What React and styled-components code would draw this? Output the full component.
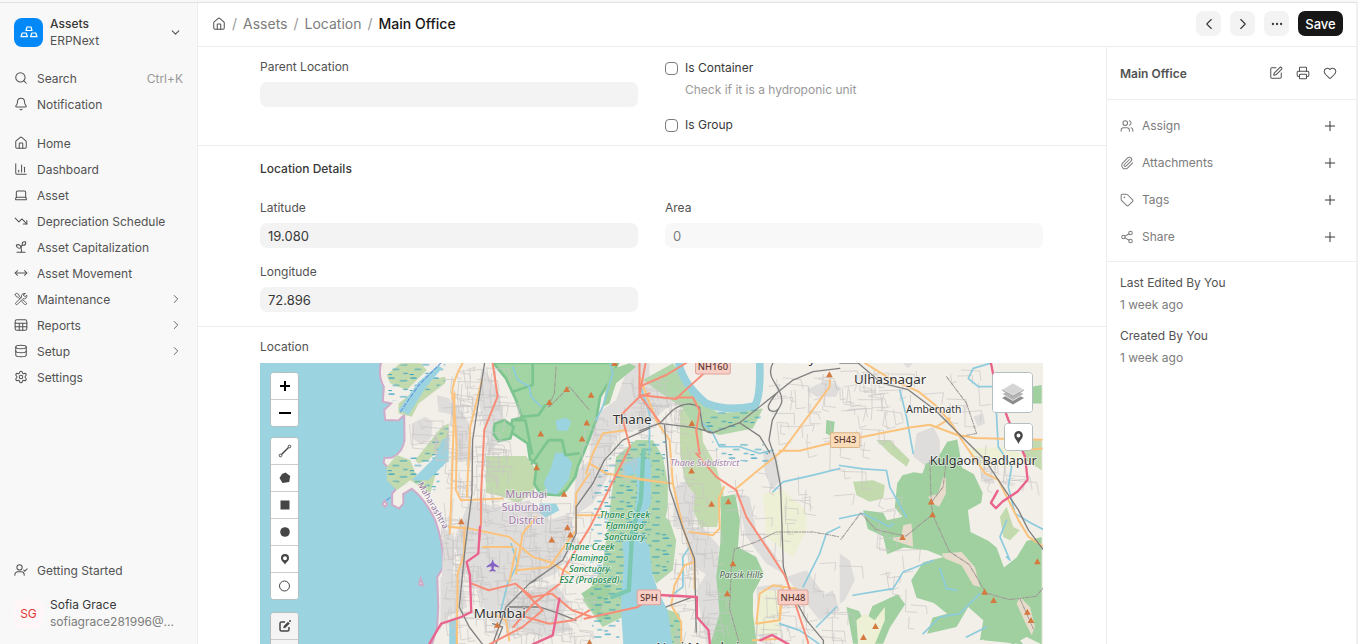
import React from 'react'
import styled, { createGlobalStyle } from 'styled-components'
import {
  Search, Bell, House, ChartColumn, Laptop, TrendingDown, Sprout, MoveHorizontal, Database,
  Settings, ChevronDown, ChevronRight, ChevronLeft, Ellipsis, SquarePen, Printer, Heart,
  Users, Paperclip, Tag, Share2, Plus,
} from 'lucide-react'

const GlobalStyle = createGlobalStyle`
  * { box-sizing: border-box; }
  body {
    margin: 0;
    background: #fff;
    color: #383838;
    font-family: Inter, "Liberation Sans", sans-serif;
    font-size: 12px;
  }
  button, input { font: inherit; color: inherit; }
  button { padding: 0; border: 0; background: none; cursor: pointer; }
  a { color: inherit; text-decoration: none; }
`

/* ---------- icons ---------- */

const Svg = ({ children, size = 14, box = 24, width = 1.75 }) => (
  <svg width={size} height={size} viewBox={`0 0 ${box} ${box}`} fill="none" stroke="currentColor"
    strokeWidth={width} strokeLinecap="round" strokeLinejoin="round" aria-hidden="true">
    {children}
  </svg>
)

const ToolsIcon = () => (
  <Svg width={1.5}>
    <path d="M2 4l2-2 4 2 1 3 3 3M2 4l2 4 3 1 3 3" />
    <path d="M14 16l2-2 5.500 5a2 2 0 0 1-2.500 2.500z" />
    <path d="M19 2.500a5 5 0 0 0-6 6.500L3 18.500a2 2 0 0 0 2.800 2.800L15.500 11.500a5 5 0 0 0 6.500-6l-3 2.500-3-2.500z" />
  </Svg>
)

const TableIcon = () => (
  <Svg>
    <rect x="2" y="3" width="20" height="18" rx="3" />
    <path d="M2 9h20M2 15h20M9 9v12M15 9v12" />
  </Svg>
)

const UserCheckIcon = () => (
  <Svg>
    <circle cx="9.500" cy="7.500" r="4.500" />
    <path d="M1.500 21v-1a5 5 0 0 1 5-5h6a5 5 0 0 1 5 5v1M16.500 12l2 2 4-4" />
  </Svg>
)

const AssetsLogo = () => (
  <svg width="18" height="12" viewBox="0 0 18 12" fill="none" stroke="#fff" strokeWidth="1.200" strokeLinejoin="round" aria-hidden="true">
    <path d="M7 1h4l1 3.500H6zM2.200 7h4l1.200 3.700H1zM11.800 7h4l1.200 3.700h-6.400z" />
  </svg>
)

/* ---------- page shell ---------- */

const Page = styled.div`
  display: flex;
  height: calc(100vh - 2px);
  overflow: hidden;
  border-top: 1px solid #dfe2e0;
  border-right: 2px solid #f0f0f0;
  outline: 2px solid #f5f8f5;
  margin-top: 2px;
`

const Sidebar = styled.nav`
  width: 198px;
  flex: none;
  display: flex;
  flex-direction: column;
  padding: 12px 14px 14px;
  background: #f8f8f8;
  border-right: 1px solid #ededed;
  color: #525252;
`

const AppSwitcher = styled.button`
  display: flex;
  align-items: center;
  gap: 7px;
  text-align: left;
  line-height: 17px;
  margin-bottom: 16px;
  padding-right: 1px;
`

const Logo = styled.span`
  width: 29px;
  height: 29px;
  border-radius: 8px;
  background: #0289f7;
  display: flex;
  align-items: center;
  justify-content: center;
`

const TwoLines = styled.span`
  flex: 1;
  min-width: 0;
  display: flex;
  flex-direction: column;
  span, strong { overflow: hidden; text-overflow: ellipsis; }
  strong { font-weight: ${p => (p.$plain ? 400 : 500)}; color: #383838; }
  span { color: ${p => (p.$plain ? '#7c7c7c' : '#525252')}; }
`

const NavGroup = styled.div`
  display: flex;
  flex-direction: column;
  margin-bottom: 13px;
`

const NavItem = styled.a`
  display: flex;
  align-items: center;
  gap: 9px;
  height: 26px;
  kbd { margin-left: auto; font: inherit; color: #999; }
  .arrow { margin-left: auto; }
`

const Bottom = styled.div`
  margin-top: auto;
`

const UserButton = styled.button`
  display: flex;
  align-items: center;
  gap: 7px;
  width: 100%;
  margin-top: 13px;
  line-height: 17px;
  text-align: left;
`

const Avatar = styled.span`
  width: 29px;
  height: 29px;
  border-radius: 8px;
  background: #fff7f7;
  color: #e03636;
  line-height: 29px;
  text-align: center;
`

const Main = styled.div`
  flex: 1;
  min-width: 0;
  display: flex;
  flex-direction: column;
`

const Header = styled.header`
  flex: none;
  display: flex;
  align-items: center;
  justify-content: space-between;
  height: 44px;
  padding: 0 13px 2px 14px;
  border-bottom: 1px solid #ededed;
`

const Crumbs = styled.div`
  display: flex;
  align-items: center;
  gap: 6px;
  font-size: 14px;
  color: #7c7c7c;
  svg { display: block; color: #525252; }
  i { font-style: normal; color: #999; }
  b { font-weight: 500; color: #171717; }
`

const Actions = styled.div`
  display: flex;
  gap: 9px;
`

const HeaderButton = styled.button`
  display: flex;
  align-items: center;
  justify-content: center;
  width: ${p => (p.$primary ? '45px' : '25px')};
  height: 25px;
  border-radius: 7px;
  background: ${p => (p.$primary ? '#171717' : '#f3f3f3')};
  color: ${p => (p.$primary ? '#fff' : '#383838')};
  font-size: 13px;
  font-weight: 500;
`

const Body = styled.div`
  flex: 1;
  min-height: 0;
  display: flex;
`

/* ---------- form ---------- */

const Form = styled.main`
  flex: 1;
  min-width: 0;
  overflow-y: auto;
  scrollbar-width: none;
`

const Section = styled.section`
  padding: ${p => p.$pad || '13px'} 63px 14px 62px;
  border-bottom: 1px solid #ededed;
  &:last-child { border: 0; }
  h2 {
    margin: 0 0 19px;
    font-size: 12px;
    font-weight: 500;
    line-height: 20px;
    color: #383838;
  }
`

const Columns = styled.div`
  display: grid;
  grid-template-columns: 1fr 1fr;
  gap: 14px 27px;
`

const Field = styled.label`
  display: flex;
  flex-direction: column;
  gap: 5px;
  line-height: 20px;
  color: #525252;
  input {
    height: 25px;
    width: 100%;
    padding: 0 8px;
    border: 0;
    border-radius: 7px;
    background: #f3f3f3;
    color: #383838;
    font-size: 13px;
    outline: none;
  }
  input:disabled { background: #f8f8f8; color: #7c7c7c; }
`

const Checks = styled.div`
  line-height: 22px;
  margin-bottom: -5px;
  p { margin: 0 0 13px 20px; color: #999; }
`

const Check = styled.label`
  display: flex;
  align-items: center;
  gap: 7px;
  color: #383838;
  input {
    appearance: none;
    width: 13px;
    height: 13px;
    margin: 0;
    border: 1px solid #7c7c7c;
    border-radius: 4px;
    background: #fff;
  }
`

const MapLabel = styled.h3`
  margin: 0 0 6px;
  font-size: 12px;
  font-weight: 400;
  line-height: 20px;
  color: #525252;
`

/* ---------- right panel ---------- */

const Panel = styled.aside`
  width: 250px;
  flex: none;
  border-left: 1px solid #ededed;
  color: #7c7c7c;
`

const PanelTitle = styled.div`
  display: flex;
  align-items: center;
  gap: 13px;
  height: 53px;
  padding: 0 19px 0 13px;
  border-bottom: 1px solid #ededed;
  color: #525252;
  h1 { flex: 1; margin: 0; font-size: 12px; font-weight: 600; }
  button { display: flex; }
`

const PanelList = styled.div`
  padding: 7px 18px 6px 13px;
  border-bottom: 1px solid #ededed;
`

const PanelRow = styled.div`
  display: flex;
  align-items: center;
  gap: 8px;
  height: 37px;
  button { margin-left: auto; display: flex; color: #383838; }
`

const History = styled.div`
  padding: 10px 13px;
  line-height: 22px;
  p { margin: 0 0 9px; }
  b { display: block; font-weight: 400; color: #525252; }
`

/* ---------- map ---------- */

const MapBox = styled.div`
  position: relative;
  height: 400px;
  overflow: hidden;
  background: #9bd4e0;
  > svg { display: block; width: 100%; height: 100%; }
`

const Control = styled.div`
  position: absolute;
  top: ${p => p.$top}px;
  ${p => (p.$right ? 'right: 10px;' : 'left: 10px;')}
  width: ${p => p.$size || 29}px;
  background: #fff;
  border: 1px solid #b5bfc2;
  border-radius: 4px;
  overflow: hidden;
  button {
    display: flex;
    align-items: center;
    justify-content: center;
    width: 100%;
    height: ${p => (p.$size ? p.$size - 2 : 26)}px;
    background: ${p => (p.$dim ? '#f4f4f4' : '#fff')};
    color: #464646;
  }
  button + button { border-top: 1px solid #ccc; height: 27px; }
`

// x offset of each map tile, in map units (three units to one screen pixel)
const W = 0
const C = 582
const E = 1152
const F = 1752

const paint = {
  water: { fill: '#9bd4e0' },
  land: { fill: '#f2efe9', stroke: '#cfabc9', strokeWidth: 6 },
  built: { fill: '#dfdddb' },
  scrub: { fill: '#c3d9ae' },
  mangrove: { fill: '#b2d6ab' },
  forest: { fill: '#a0d0a0' },
  park: { fill: '#a3d5a4', stroke: '#7cc490', strokeWidth: 8 },
  farm: { fill: '#eef0d5' },
  marsh: { fill: 'url(#marsh)' },
  bare: { fill: '#e7dccb' },
  street: { stroke: '#c9c5c5', strokeWidth: 2 },
  river: { stroke: '#8ccbdd', strokeWidth: 5 },
  wide: { stroke: '#98d0dc', strokeWidth: 23 },
  path: { stroke: '#a09694', strokeWidth: 3, strokeDasharray: '12 4 3 4' },
  orange: { stroke: '#fbc27c', strokeWidth: 6 },
  rail: { stroke: '#808080', strokeWidth: 4 },
  trunk: { stroke: '#f88d77', strokeWidth: 6 },
  motorway: { stroke: '#ea638c', strokeWidth: 7 },
}

const features = [
  ['land', W, 'M380 0Q366 45 386 80L383 125 408 130 387 150 390 180 430 181 447 165 448 240Q442 278 412 292L388 294 385 308 405 330 412 360 422 388 411 400 411 434 432 445 445 430 444 402 470 386Q512 420 540 480Q568 560 562 625L546 650 549 740 546 800 528 860 2500 860 2500 0Z'],
  ['land', W, 'M388 422l8 10-6 8-8-8zM496 655l8 20-12-2z'],
  ['water', C, 'M0 785L20 770 26 852 0 852Z'],
  // built-up areas
  ['built', W, 'M470 190l40-20 22 14-4 50-30 20-28-20zM545 105l38 10 15 50-48-10zM565 500l30 30v200l-40 80z'],
  ['built', W, 'M556 650l60-10 20 100-80 40z'],
  ['built', C, 'M20 130l40 60 10 100-50 20zM100 20l50 80 20 120-50 60-30-150zM60 420l80 20 100-20 60 60 60-20 20 80-60 100-150 60-100-20-60-130zM430 170l70-50 40-110 60 0 0 190-90 20-60 110-30-30zM380 330l60-40 40 50-50 90-60 40zM60 560l80-10 60 70-50 60-90-30zM80 690l100-20 50 60 80-20 60 100-90 20-160-50zM200 700l120-30 40 60-60 90z'],
  ['built', E, 'M0 60l80-30 30 90-70 60-40-20zM105 380l40-20 35 60-20 80-60 0zM230 590l30-10-20 270-40 0-30-160zM290 400l40 10 20 100 60 80 20 50-50-30-60-80zM370 270l40 10 15 80-30 30-20-60zM130 500l60 0 50 60-30 90-60-40zM500 90l60-30 40 20-10 30-60 0zM440 650l60-20 60 80-60 20zM500 730l80-40 20 60-60 30zM350 680l80-10-10 150-60 20z'],
  ['built', F, 'M230 220l50-20 20 40 0 60-40 20-40-30zM0 580l30 20 15 60-30 60-15 10zM400 170l30-10 5 30-20 10zM425 340l30 0 10 30-30 0zM190 10l30 0-15 15z'],
  // marsh, farmland, green
  ['farm', E, 'M370 400l60-10 70 60 0 60-40 80-80-60zM360 690l60 0 0 130-70 0z'],
  ['farm', F, 'M380 265l120-5 60 30-20 30-120 0z'],
  ['scrub', W, 'M395 45l40-35 60 0 20 20-60 60-50-20zM430 130l90-70 50-10 0 20-80 60-20 40-40-10zM480 300l80-100 20-10 0 50-60 60-30 10zM395 320l30-35 40 15 20 50 60-20-20 70-60-40-40 30-30-30z'],
  ['scrub', C, 'M110 288l120 0 30 40-5 70-50 30-50-20-45-10z'],
  ['mangrove', C, 'M500 290l60-50 40 0 0 200-30 70-10 100-40 30 0 130-60 30-60-80 60-100z'],
  ['scrub', E, 'M120 150l40-15 25 20 5 90 40 75 22 80-20 100-50 0-20-50 5-45-30-40-15-80z'],
  ['mangrove', E, 'M0 250l40-10 30 50 15 80 0 70-20 100-30 80-35-30zM30 440l60 40 20 60-10 90-50 40-20-50zM60 740l60 20 10 92-60 0zM10 60l90-50 90 120 50 30 130-15-30 60-100 20-70-20-40-60z'],
  ['scrub', F, 'M40 365l60-5 35 15-5 40-40 10-40-20zM480 470l20-30 20 60 20 10-30 30-20-10zM110 240l40 0 60 60-10 20-50-40zM540 240l65 0 0 90-50-30z'],
  ['park', C, 'M132 9L170 55 200 120 218 172 190 180 178 212 198 225 235 250 242 298 262 312 255 372 275 402 330 405 350 390 378 350 385 320 398 290 420 235 440 180 452 110 482 60 505 9Z'],
  ['park', C, 'M135 192l30-12 28 20-10 35-35 8-15-20z'],
  ['forest', C, 'M480 30l60-20 20 10-60 50-20 60-20 10zM395 700l60-40 30 30-30 60 30 20-30 10z'],
  ['forest', E, 'M245 410l42-8 14 78-6 80 55 30 22 50-32 60 0 60 12 92-140 0 28-92-10-110 12-100zM560 180l25 5-5 45-22-10z'],
  ['forest', F, 'M188 345L222 336 248 340 258 310 290 300 322 245 352 238 358 270 366 322 402 342 428 398 424 428 384 450 392 515 446 542 470 562 492 622 530 592 560 542 605 530 605 852 560 830 520 852 470 832 420 840 430 780 385 740 350 800 262 820 278 772 322 760 282 728 230 712 214 660 250 606 312 590 262 570 192 562 142 582 130 528 84 506 70 450 130 458 142 480 188 470 165 442 172 370Z'],
  ['forest', F, 'M20 740l38 12 18 40 22-55 76-35 22 30-46 70-20 48-90 0zM575 80l30-5 0 55-30 0zM430 840l60-60 60 72z'],
  ['farm', F, 'M50 780l25-20 30 20 30-40 0 40-30 72-50 0z'],
  ['bare', F, 'M265 410l30-10 15-50 8 5 0 45-20 40-20-10zM190 495l25-5 5 70-60-20 0-10 25 0zM305 580l60-5 40 45 15 60-20-5-35-60-50-20zM540 710l30 30 15 60-10 25-20-40-25-55z'],
  ['marsh', W, 'M400 20l100-15 70 0 0 60-60 40-110 20zM400 300l90-10 90-100 0 120-40 80-150-30z'],
  ['marsh', C, 'M430 380l70-120 100-30 0 300-60 20-30 180 0 110-80 0-10-200z'],
  ['marsh', E, 'M0 250l80-10-20 260 40 40-20 110-50 20-50-160zM60 740l70 50 0 62-50 0zM190 160l180-30-10 60-100 20-60-10zM210 230l60 20 100 0 30 60-60 0-100-20z'],
  ['water', C, 'M318 278l25 0 25 30-10 50-35 45-30-5-10-30 20-40zM318 182l30-10 18 12-12 28-30 0zM270 430l50 0 10 20-40 22-20-14zM520 310l50-20 34 10 0 130-30 60-26 0 16-90-4-60-40 10z'],
  ['water', C, 'M518 548L570 520 600 560 608 640 625 690 655 752 670 860 522 860 514 740 524 600Z'],
  ['water', W, 'M430 150l60-85 60-50 10 10-50 60-50 80zM470 360l70-70 20-50 20-10 0 70-60 60z'],
  ['wide', E, 'M116 0Q126 70 200 130Q260 155 344 138Q364 116 360 0'],
  // rivers and streams
  ['river', C, 'M190 20l15 40 35 20 5 30 30 30M185 550l20 60-30 60-20 80M480 0l10 40-30 100-20 40'],
  ['river', E, 'M190 190l30 30 20 40 60 0 60 20 40-10M400 395l30-30 90-20 80-20M600 500l-40 20-20 60-50 100M150 560l-20 30 0 90-40 30M0 70l30 90 0 120M420 790l60 20 60 42M590 740l-60 60'],
  ['river', F, 'M450 10l-50 15-15 30 30 25 50 0 10 180 40 60-10 60 20 80 50 30 60 30M180 90l20 80 20 110M0 316l70 10 70 5 10 50 50 90M0 475l70-15 80 40 10-10M500 480l-20 50 30 70-10-10M40 705l120-20 30-50 90-35M250 820l50-50 60-10 60-60M300 625l20 60 30 5M380 830l60-30'],
  // local roads
  ['path', C, 'M320 20l-5 80-18 40M300 140l60-60 60 70M295 100'],
  ['path', E, 'M285 565l-10 60-5 120 30 107M290 565l60-20 60-30 110 0 80 15M120 0'],
  ['path', F, 'M270 300l4 125 4 38 50 110 60 40 50 85 70 20 80-10 65-75M320 290l-10 90-35 45M278 463l-80 65-90-20-45-50-60 80M540 715l40 90M380 130l30 90-50 10M320 50l60 80'],
  ['orange', W, 'M598 100l-8 260-6 160M582 500l60 5'],
  ['orange', C, 'M40 9Q-5 90 15 130L22 260 20 390 35 420 160 415M98 60l-35 140-10 200 0 10M0 500l60 5 120 25 70 60 50 15 60 35M45 500l0 80-20 60-2 212M100 560l90 0M260 470l-40 50-20 120M180 665l20-100M410 340l20-60 30-60 70-10M420 310l50 30 130 20M200 630l100-10 80-110 0-110 40-60M380 465l80 0M180 840l-10-60-40-20'],
  ['orange', E, 'M0 50l50 130 40 60 10 130 30 130 35 105 0 80M0 358l100 12M150 515l70 10 20-20-2-90 15-35M290 385l60-50 80-65 30-40 110-150 0-20M420 272l60 0 120-30M165 605l-30 10-30 60-10 60 30 50 0 60M350 790l10-90 40-25 70 10M420 760l10-80M350 790l70-10 10-90M340 840l80-5'],
  ['orange', F, 'M75 9l80 50 80 35 50 40 45 50 45 70 60 85 40 20 30 60 30 60 30 50 60 40M0 240l60-8 150-30 60-8 80 30 55 10 200 5M560 270l45-5M330 175l-40 25'],
  ['rail', C, 'M106 9L90 110 70 240 68 400 48 560 30 740 60 800 100 852M130 852L170 740 240 670 340 600 380 520 380 440 430 370 465 300 520 240 600 205M240 670l20-10M180 740l90 0 60 20 50 20M130 790l30 10-20 50'],
  ['rail', E, 'M0 212L60 190 100 150Q145 118 180 142L188 195 Q200 225 225 216L300 188 385 120 460 60 520 35 600 25M400 9Q385 35 400 60L418 90Q430 115 425 130Q415 155 400 154Q385 152 386 138Q390 125 412 98M420 140l-22 40-10 60 20 60 15 80 8 240 20 70 50 90 50 60 0 100M60 190l100 12 60 16M75 195l5 60 10 130 40 120 35 90 5 220M300 188l60 40 30 50M80 740l80-30'],
  ['rail', F, 'M0 9l55 0 70 60 80 20 80 60 80 80 70 70 40 60 60 90 30 60 60 80 40 50'],
  ['trunk', C, 'M130 9l15 100-40 100-10 200 0 80-5 50M68 670l50 20 80-20 50 40 60-10 60 50 60 20M220 690l60 60-60 50-100 52M520 180l22 80-120 240-80 130-10 40-80 60-60 70M600 100l-30 10-50 50-10 10M570 0l0 100M230 770l70 20 70-10 50-30M590 0l-20 105 60 80'],
  ['trunk', E, 'M0 105l110 12 20-20 100-90M0 80l80-35 60-36M110 112l50 0 20 40-10 60 10 70M170 280l60 70 60 40 30 80 60 90 55 85 30 80 40 120 5 47M55 700l-60 40-160 35M165 780'],
  ['motorway', C, 'M92 500l-5 80-35 25 10 40 4 110-30 15M330 715l-20 110-60 27M36 770L-24 790-48 830-60 852'],
  ['motorway', E, 'M60 704l112 6 0 60 35 40 4 42M362 840l35-16 50 28'],
  ['motorway', F, 'M453 9l12 60 40 110 50 110 8 70-30 35-45 30-20 20-15-16 20-36'],
]

// [x, y, width, height, count]: blocks filled with minor streets
const blocks = [
  [W + 455, 160, 130, 120, 12], [W + 560, 20, 60, 500, 36], [W + 560, 500, 60, 280, 30],
  [C + 0, 20, 140, 380, 84], [C + 10, 400, 240, 420, 110], [C + 240, 430, 130, 200, 40],
  [C + 200, 640, 200, 200, 50], [C + 400, 170, 130, 170, 30], [C + 510, 40, 100, 140, 24],
  [E + 0, 40, 120, 150, 22], [E + 85, 250, 90, 300, 30], [E + 90, 560, 130, 280, 40],
  [E + 380, 20, 210, 240, 30], [E + 250, 310, 340, 250, 24], [E + 350, 680, 90, 150, 20],
  [E + 440, 590, 160, 250, 18], [F + 0, 20, 180, 230, 40], [F + 200, 20, 230, 160, 12],
  [F + 380, 220, 140, 180, 16], [F + 0, 320, 150, 330, 12], [F + 100, 570, 120, 240, 8],
]

const makeStreets = () => {
  let seed = 7
  const rnd = () => {
    seed = (seed * 16807) % 2147483647
    return seed / 2147483647
  }
  return blocks.map(([x, y, w, h, n]) => {
    let d = ''
    for (let i = 0; i < n; i++) {
      const len = 22 + rnd() * 55
      const lean = rnd() * 16 - 8
      d += `M${Math.round(x + rnd() * w)} ${Math.round(y + rnd() * h)}`
      d += i % 2
        ? `l${Math.round(len)} ${Math.round(lean)} ${Math.round(lean)} ${Math.round(len / 2)}`
        : `l${Math.round(lean)} ${Math.round(len)} ${Math.round(len / 2)} ${Math.round(-lean)}`
    }
    return d
  }).join('')
}

const streets = makeStreets()

const peaks = [
  [C, 300, 127], [C, 352, 88], [C, 425, 105], [C, 412, 188], [C, 398, 236], [C, 274, 221], [C, 262, 322],
  [C, 344, 402], [C, 354, 502], [C, 363, 524], [C, 307, 539], [C, 36, 484], [C, 144, 794], [C, 420, 847], [C, 495, 10],
  [E, 157, 190], [E, 156, 332], [E, 216, 432], [E, 266, 424], [E, 280, 610], [E, 263, 700], [E, 569, 44],
  [F, 274, 425], [F, 278, 463], [F, 188, 531], [F, 434, 695], [F, 461, 720], [F, 562, 755], [F, 573, 780],
  [F, 592, 604], [F, 107, 798], [F, 71, 831],
]

const PlaceName = styled.text`
  font-family: "Noto Sans", sans-serif;
  font-size: ${p => p.$size || 40}px;
  font-style: ${p => (p.$italic ? 'italic' : 'normal')};
  font-weight: ${p => p.$weight || 400};
  fill: ${p => p.$color || '#333'};
  stroke: #fff;
  stroke-opacity: 0.6;
  stroke-width: 5px;
  stroke-linejoin: round;
  paint-order: stroke;
  text-anchor: middle;
`

const Shield = ({ x, y, w, orange, children }) => (
  <g>
    <rect x={x - w / 2} y={y - 22} width={w} height="44" rx="5"
      fill={orange ? '#fbdcb8' : '#f8cfc6'} stroke={orange ? '#d9b285' : '#e0a198'} strokeWidth="3" />
    <text x={x} y={y + 10} textAnchor="middle" fontFamily='"Noto Sans", sans-serif' fontSize="28" fontWeight="500" fill="#5d3a34">
      {children}
    </text>
  </g>
)

const isArea = ([kind]) => !paint[kind].stroke || kind === 'land' || kind === 'park'

const Feature = ({ item: [kind, x, d] }) => (
  <path d={d} transform={`translate(${x} 0)`} {...paint[kind]} />
)

const MapCanvas = () => (
  <svg viewBox="15 9 2346 1200" preserveAspectRatio="xMinYMin slice" role="img" aria-label="Map of Mumbai">
    <defs>
      <pattern id="marsh" width="66" height="48" patternUnits="userSpaceOnUse">
        <path d="M4 6h18M38 14h22M16 28h20M48 40h14M2 44h12" stroke="#2d9fc0" strokeWidth="3" />
      </pattern>
    </defs>
    {features.filter(isArea).map(item => <Feature key={item[2]} item={item} />)}
    <g fill="none" strokeLinejoin="round" strokeLinecap="round">
      <path d={streets} {...paint.street} />
      <path d="M1164 270L1156 420 1130 520 1120 690 1070 710" stroke="#7cc8b0" strokeWidth="13" />
      <path d="M770 180l40 0 20 100M832 9l0 66-60 20M800 170l50-5 20-30M830 310l50-70 40 0 10 45 40-5" stroke="#7cc490" strokeWidth="8" />
      {features.filter(item => !isArea(item)).map(item => <Feature key={item[2]} item={item} />)}
      <path d="M436 155l55-80 70-70M395 420l12-10" stroke="#5f8fe0" strokeWidth="3" strokeDasharray="12 6" />
    </g>
    {peaks.map(([t, x, y]) => (
      <path key={`${t}-${x}-${y}`} d={`M${t + x} ${y - 10}l10 18h-20z`} fill="#d4793f" />
    ))}
    <path d="M712 596l4 12 14 10v4l-14-4-1 8 6 5v3l-9-2-9 2v-3l6-5-1-8-14 4v-4l14-10z" fill="#8461c4" />

    <PlaceName x={C + 548} y="192">Thane</PlaceName>
    <PlaceName x={C + 151} y="774">Mumbai</PlaceName>
    <PlaceName x={F + 151} y="71">Ulhasnagar</PlaceName>
    <PlaceName x={F + 430} y="315" $size={38}>Kulgaon Badlapur</PlaceName>
    <PlaceName x={F + 282} y="159" $size={31}>Ambernath</PlaceName>
    <PlaceName x={E + 175} y="874">Navi Mumbai</PlaceName>
    <PlaceName x={E + 512} y="8">Kalyan</PlaceName>
    <PlaceName $size={32} $color="#9d78a8">
      <tspan x={C + 231} y="413">Mumbai</tspan>
      <tspan x={C + 231} y="453">Suburban</tspan>
      <tspan x={C + 231} y="492">District</tspan>
    </PlaceName>
    <PlaceName x={E + 195} y="318" $size={27} $italic $color="#a67fae">Thane Subdistrict</PlaceName>
    <PlaceName $size={27} $italic $weight={500} $color="#1f8a50">
      <tspan x={C + 526} y="472">Thane Creek</tspan>
      <tspan x={C + 526} y="505">Flamingo</tspan>
      <tspan x={C + 526} y="538">Sanctuary</tspan>
      <tspan x={C + 420} y="570">Thane Creek</tspan>
      <tspan x={C + 420} y="602">Flamingo</tspan>
      <tspan x={C + 420} y="635">Sanctuary</tspan>
      <tspan x={C + 420} y="668">ESZ (Proposed)</tspan>
    </PlaceName>
    <PlaceName x={E + 305} y="652" $size={27} $italic $color="#4c6150">Parsik Hills</PlaceName>
    <PlaceName x="0" y="0" $size={26} $color="#8d6f98" transform="translate(526 440) rotate(60)">Maharashtra</PlaceName>
    <Shield x={E + 220} y={20} w={104}>NH160</Shield>
    <Shield x={E + 28} y={711} w={70}>SPH</Shield>
    <Shield x={E + 460} y={711} w={90}>NH48</Shield>
    <Shield x={F + 16} y={240} w={88} orange>SH43</Shield>
  </svg>
)

const Pin = ({ size = 12 }) => (
  <svg width={size} height={size + 2} viewBox="0 0 12 14" aria-hidden="true">
    <path d="M6 1a4 4 0 0 0-4 4c0 3 2.500 4.500 4 8 1.500-3.500 4-5 4-8a4 4 0 0 0-4-4zm0 2.300a1.800 1.800 0 1 1 0 3.600 1.800 1.800 0 0 1 0-3.600z" fill="currentColor" fillRule="evenodd" />
  </svg>
)

const shapes = {
  'Draw a polyline': <><path d="M3.500 10.500l7-7" stroke="currentColor" strokeWidth="1.500" /><circle cx="2.500" cy="11.500" r="1.300" fill="#fff" stroke="currentColor" /><circle cx="11.500" cy="2.500" r="1.300" fill="#fff" stroke="currentColor" /></>,
  'Draw a polygon': <path d="M7.500 1.500l4.700 3.500-1 6-6.700 1L1.500 7 4 3z" fill="currentColor" />,
  'Draw a rectangle': <path d="M2.500 2.500h9v9h-9z" fill="currentColor" />,
  'Draw a circle': <circle cx="7" cy="7" r="4.800" fill="currentColor" />,
  'Draw a marker': <path d="M7 2a4 4 0 0 0-4 4c0 3 2.800 4 4 6.500 1.200-2.500 4-3.500 4-6.500a4 4 0 0 0-4-4zm0 2.200a2 2 0 1 1 0 4 2 2 0 0 1 0-4z" fill="currentColor" fillRule="evenodd" />,
  'Draw a circlemarker': <circle cx="6.500" cy="7" r="5" fill="none" stroke="currentColor" />,
}

const LocationMap = () => (
  <MapBox>
    <MapCanvas />
    <Control $top={9}>
      <button type="button" aria-label="Zoom in">
        <svg width="12" height="12" viewBox="0 0 12 12"><path d="M6 1v10M1 6h10" stroke="#000" strokeWidth="2" /></svg>
      </button>
      <button type="button" aria-label="Zoom out">
        <svg width="12" height="12" viewBox="0 0 12 12"><path d="M0 6h12" stroke="#000" strokeWidth="2" /></svg>
      </button>
    </Control>
    <Control $top={74}>
      {Object.keys(shapes).map(name => (
        <button type="button" key={name} aria-label={name}>
          <svg width="14" height="14" viewBox="0 0 14 14">{shapes[name]}</svg>
        </button>
      ))}
    </Control>
    <Control $top={249} $dim>
      <button type="button" aria-label="Edit layers">
        <svg width="14" height="14" viewBox="0 0 14 14" fill="none" stroke="currentColor" strokeWidth="1.500">
          <path d="M7 3H3.500A1.500 1.500 0 0 0 2 4.500v6A1.500 1.500 0 0 0 3.500 12h6a1.500 1.500 0 0 0 1.500-1.500V8" />
          <path d="M5.500 9l.5-2 4-4 1.500 1.500-4 4z" fill="currentColor" strokeWidth=".5" />
          <path d="M12 1v2M11 2h2" strokeWidth="1" />
        </svg>
      </button>
      <button type="button" aria-label="Delete layers" />
    </Control>
    <Control $top={9} $right $size={41}>
      <button type="button" aria-label="Layers">
        <svg width="26" height="26" viewBox="0 0 26 26">
          <path d="M13 12l11 6-11 6.500L2 18z" fill="#8c8c8c" />
          <path d="M13 8l11 6-11 6.500L2 14z" fill="#b5b5b5" stroke="#fff" strokeWidth=".7" />
          <path d="M13 3l11 6.500-11 6.500L2 9.500z" fill="#d5d5d5" stroke="#fff" strokeWidth=".7" />
          <path d="M2 10l11 6.300L24 10" fill="none" stroke="#9c9c9c" />
        </svg>
      </button>
    </Control>
    <Control $top={60} $right>
      <button type="button" aria-label="Show my location"><Pin size={13} /></button>
    </Control>
  </MapBox>
)

/* ---------- data ---------- */

const line = { size: 14, strokeWidth: 1.75 }

const menu = [
  { label: 'Home', icon: <House {...line} /> },
  { label: 'Dashboard', icon: <ChartColumn {...line} /> },
  { label: 'Asset', icon: <Laptop {...line} /> },
  { label: 'Depreciation Schedule', icon: <TrendingDown {...line} /> },
  { label: 'Asset Capitalization', icon: <Sprout {...line} /> },
  { label: 'Asset Movement', icon: <MoveHorizontal {...line} /> },
  { label: 'Maintenance', icon: <ToolsIcon />, more: true },
  { label: 'Reports', icon: <TableIcon />, more: true },
  { label: 'Setup', icon: <Database {...line} />, more: true },
  { label: 'Settings', icon: <Settings {...line} /> },
]

const links = [
  { label: 'Assign', icon: <Users {...line} /> },
  { label: 'Attachments', icon: <Paperclip {...line} /> },
  { label: 'Tags', icon: <Tag {...line} /> },
  { label: 'Share', icon: <Share2 {...line} /> },
]

export default function App() {
  return (
    <>
      <GlobalStyle />
      <Page>
        <Sidebar>
          <AppSwitcher type="button">
            <Logo><AssetsLogo /></Logo>
            <TwoLines><strong>Assets</strong><span>ERPNext</span></TwoLines>
            <ChevronDown size={13} strokeWidth={2} />
          </AppSwitcher>
          <NavGroup>
            <NavItem href="#search"><Search {...line} />Search<kbd>Ctrl+K</kbd></NavItem>
            <NavItem href="#notification"><Bell {...line} />Notification</NavItem>
          </NavGroup>
          <NavGroup>
            {menu.map(item => (
              <NavItem href="#menu" key={item.label}>
                {item.icon}{item.label}
                {item.more && <ChevronRight className="arrow" size={14} strokeWidth={1.5} />}
              </NavItem>
            ))}
          </NavGroup>
          <Bottom>
            <NavItem href="#start"><UserCheckIcon />Getting Started</NavItem>
            <UserButton type="button">
              <Avatar>SG</Avatar>
              <TwoLines $plain><strong>Sofia Grace</strong><span>sofiagrace281996@...</span></TwoLines>
            </UserButton>
          </Bottom>
        </Sidebar>

        <Main>
          <Header>
            <Crumbs>
              <a href="#home" aria-label="Home"><House {...line} /></a>
              <i>/</i><a href="#assets">Assets</a>
              <i>/</i><a href="#location">Location</a>
              <i>/</i><b>Main Office</b>
            </Crumbs>
            <Actions>
              <HeaderButton type="button" aria-label="Previous"><ChevronLeft size={18} strokeWidth={1.5} /></HeaderButton>
              <HeaderButton type="button" aria-label="Next"><ChevronRight size={18} strokeWidth={1.5} /></HeaderButton>
              <HeaderButton type="button" aria-label="Menu"><Ellipsis size={14} /></HeaderButton>
              <HeaderButton type="button" $primary>Save</HeaderButton>
            </Actions>
          </Header>

          <Body>
            <Form>
              <Section $pad="10px">
                <Columns>
                  <Field>Parent Location<input type="text" /></Field>
                  <Checks>
                    <Check><input type="checkbox" />Is Container</Check>
                    <p>Check if it is a hydroponic unit</p>
                    <Check><input type="checkbox" />Is Group</Check>
                  </Checks>
                </Columns>
              </Section>
              <Section>
                <h2>Location Details</h2>
                <Columns>
                  <Field>Latitude<input type="text" defaultValue="19.080" /></Field>
                  <Field>Area<input type="text" defaultValue="0" disabled /></Field>
                  <Field>Longitude<input type="text" defaultValue="72.896" /></Field>
                </Columns>
              </Section>
              <Section $pad="10px">
                <MapLabel>Location</MapLabel>
                <LocationMap />
              </Section>
            </Form>

            <Panel>
              <PanelTitle>
                <h1>Main Office</h1>
                <button type="button" aria-label="Rename"><SquarePen {...line} /></button>
                <button type="button" aria-label="Print"><Printer {...line} /></button>
                <button type="button" aria-label="Like"><Heart {...line} /></button>
              </PanelTitle>
              <PanelList>
                {links.map(item => (
                  <PanelRow key={item.label}>
                    {item.icon}{item.label}
                    <button type="button" aria-label={`Add ${item.label}`}><Plus size={16} strokeWidth={1.5} /></button>
                  </PanelRow>
                ))}
              </PanelList>
              <History>
                <p><b>Last Edited By You</b>1 week ago</p>
                <p><b>Created By You</b>1 week ago</p>
              </History>
            </Panel>
          </Body>
        </Main>
      </Page>
    </>
  )
}
